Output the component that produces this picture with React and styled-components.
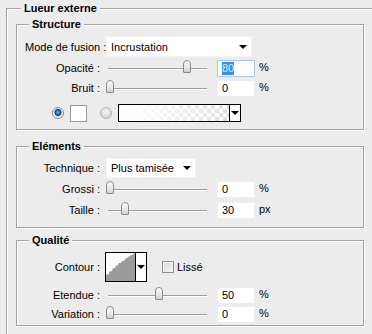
import React from "react";
import styled, { createGlobalStyle } from "styled-components";

const Global = createGlobalStyle`
  html, body {
    margin: 0;
    padding: 0;
    background: #ececec;
    overflow: hidden;
  }
  body {
    font-family: "Liberation Sans", Arial, sans-serif;
    font-size: 11px;
    color: #000;
  }
`;

const Page = styled.div`
  width: 372px;
  height: 334px;
  padding-left: 6px;
  box-sizing: border-box;
`;

const Group = styled.fieldset`
  box-sizing: border-box;
  min-width: 0;
  margin: ${(p) => p.$mt || 0}px 0 0 0;
  width: ${(p) => p.$w}px;
  padding: ${(p) => p.$pt || 0}px 8px ${(p) => p.$pb || 0}px ${(p) => p.$pl || 8}px;
  border: 1px solid #a2a2a2;
  box-shadow: 1px 1px 0 #fff, inset 1px 1px 0 #fff;
`;

const Outer = styled(Group)`
  margin-top: 2px;
  height: 340px;
`;

const Title = styled.legend`
  margin-left: ${(p) => p.$ml}px;
  padding: 0 3px;
  font-weight: bold;
  line-height: 13px;
  background: #ececec;
`;

const Row = styled.div`
  display: flex;
  align-items: center;
  height: ${(p) => p.$h}px;
  margin-top: ${(p) => p.$mt || 0}px;
`;

const Label = styled.span`
  flex: none;
  width: 75px;
  text-align: right;
  white-space: pre;
  margin-right: 6px;
`;

const Select = styled.div`
  position: relative;
  box-sizing: border-box;
  width: ${(p) => p.$w}px;
  height: ${(p) => p.$h}px;
  background: #fff;
  border: 1px solid #f4f4f4;
  display: flex;
  align-items: center;
  padding-left: 4px;
`;

const Arrow = styled.span`
  position: absolute;
  right: ${(p) => p.$r}px;
  top: 50%;
  margin-top: -2px;
  width: 0;
  height: 0;
  border-left: 4px solid transparent;
  border-right: 4px solid transparent;
  border-top: 4px solid #000;
`;

const Slider = styled.div`
  position: relative;
  flex: none;
  width: 104px;
  height: 16px;
`;

const Track = styled.div`
  position: absolute;
  left: 2px;
  right: 3px;
  top: 8px;
  height: 1px;
  background: #9c9c9c;
  box-shadow: 0 1px 0 #fff;
`;

const Thumb = styled.div`
  position: absolute;
  top: 0;
  box-sizing: border-box;
  width: 8px;
  height: 13px;
  border: 1px solid #8a8a8a;
  border-radius: 4px 4px 1px 1px;
  background: linear-gradient(to bottom, #ffffff, #e2e2e2 70%, #cfcfcf);
`;

const NumBox = styled.div`
  flex: none;
  box-sizing: border-box;
  width: 38px;
  height: 17px;
  margin-left: 7px;
  background: #fff;
  border: 1px solid ${(p) => (p.$focus ? "#a9c8ea" : "#eeeeee")};
  display: flex;
  align-items: center;
  padding-left: 4px;
`;

const Selected = styled.span`
  background: #3d8ee0;
  color: #dbe9f8;
  line-height: 13px;
`;

const Unit = styled.span`
  margin-left: 4px;
  margin-top: -3px;
`;

const Radio = styled.span`
  flex: none;
  box-sizing: border-box;
  width: 12px;
  height: 12px;
  border-radius: 50%;
  margin-left: ${(p) => p.$ml}px;
  border: 1px solid ${(p) => (p.$on ? "#7f8d99" : "#b4b4b4")};
  background: ${(p) =>
    p.$on
      ? "radial-gradient(circle at 50% 45%, #6fb4e6 0, #1f6fb0 2.2px, #0d3f6e 3.2px, #dfe8f0 3.8px, #f6f6f6 6px)"
      : "radial-gradient(circle at 50% 40%, #f4f4f4 0, #d8d8d8 5px)"};
`;

const Swatch = styled.span`
  flex: none;
  box-sizing: border-box;
  width: 17px;
  height: 17px;
  margin-left: 6px;
  background: #fff;
  border: 1px solid #9a9a9a;
`;

const GradientPick = styled.div`
  flex: none;
  box-sizing: border-box;
  display: flex;
  width: 123px;
  height: 18px;
  margin-left: 6px;
  border: 1px solid #000;
  background: #fff;
`;

const Checker = styled.div`
  flex: 1;
  background:
    linear-gradient(to right, #fff 0%, rgba(255, 255, 255, 0.85) 25%, rgba(255, 255, 255, 0) 100%),
    repeating-conic-gradient(#dedede 0 25%, #fff 0 50%) 0 0 / 8px 8px;
`;

const PickArrow = styled.div`
  position: relative;
  flex: none;
  width: 10px;
  border-left: 1px solid #000;
  background: #fff;
`;

const ContourBox = styled.div`
  flex: none;
  box-sizing: border-box;
  display: flex;
  width: 42px;
  height: 30px;
  margin-left: -1px;
  border: 1px solid #000;
  background: #fff;
`;

const Check = styled.span`
  flex: none;
  box-sizing: border-box;
  width: 12px;
  height: 12px;
  margin-left: 15px;
  border: 1px solid #8e8e8e;
  background: linear-gradient(135deg, #d6d6d6, #f7f7f7);
  box-shadow: inset 1px 1px 0 #fff;
`;

const CheckText = styled.span`
  margin-left: 3px;
`;

function SliderRow({ label, pct, value, unit, focus, mt }) {
  return (
    <Row $h={16} $mt={mt}>
      <Label>{label}</Label>
      <Slider>
        <Track />
        <Thumb style={{ left: Math.round(pct * 96) }} />
      </Slider>
      <NumBox $focus={focus}>{focus ? <Selected>{value}</Selected> : value}</NumBox>
      <Unit>{unit}</Unit>
    </Row>
  );
}

function ContourIcon() {
  return (
    <svg width="29" height="28" viewBox="0 0 29 28">
      <polygon
        fill="#9b9b9b"
        points="0,28 0,22 3,21 3,19 6,18 7,15 9,15 10,13 12,12 13,10 15,10 16,8 18,8 19,6 21,5 22,4 24,3 25,2 27,2 28,0 29,0 29,28"
      />
    </svg>
  );
}

export default function App() {
  return (
    <Page>
      <Global />
      <Outer $w={380} $pt={3} $pl={9}>
        <Title $ml={5}>Lueur externe</Title>

        <Group $w={348} $pt={5} $pb={7}>
          <Title $ml={4}>Structure</Title>
          <Row $h={21}>
            <Label>Mode de fusion :</Label>
            <Select $w={146} $h={21}>
              Incrustation
              <Arrow $r={4} />
            </Select>
          </Row>
          <SliderRow label="Opacité :" pct={0.8} value="80" unit="%" focus mt={3} />
          <SliderRow label="Bruit :" pct={0} value="0" unit="%" mt={4} />
          <Row $h={18} $mt={8}>
            <Radio $on $ml={27} />
            <Swatch />
            <Radio $ml={13} />
            <GradientPick>
              <Checker />
              <PickArrow>
                <Arrow $r={1} />
              </PickArrow>
            </GradientPick>
          </Row>
        </Group>

        <Group $w={348} $mt={10} $pt={5} $pb={9}>
          <Title $ml={4}>Eléments</Title>
          <Row $h={20}>
            <Label>Technique :</Label>
            <Select $w={90} $h={20}>
              Plus tamisée
              <Arrow $r={4} />
            </Select>
          </Row>
          <SliderRow label="Grossi :" pct={0} value="0" unit="%" mt={3} />
          <SliderRow label="Taille :" pct={0.16} value="30" unit="px" mt={5} />
        </Group>

        <Group $w={348} $mt={6} $pt={5} $pb={3}>
          <Title $ml={4}>Qualité</Title>
          <Row $h={30}>
            <Label>Contour :</Label>
            <ContourBox>
              <ContourIcon />
              <PickArrow>
                <Arrow $r={1} />
              </PickArrow>
            </ContourBox>
            <Check />
            <CheckText>Lissé</CheckText>
          </Row>
          <SliderRow label="Etendue :" pct={0.51} value="50" unit="%" mt={5} />
          <SliderRow label="Variation :" pct={0} value="0" unit="%" mt={3} />
        </Group>
      </Outer>
    </Page>
  );
}
